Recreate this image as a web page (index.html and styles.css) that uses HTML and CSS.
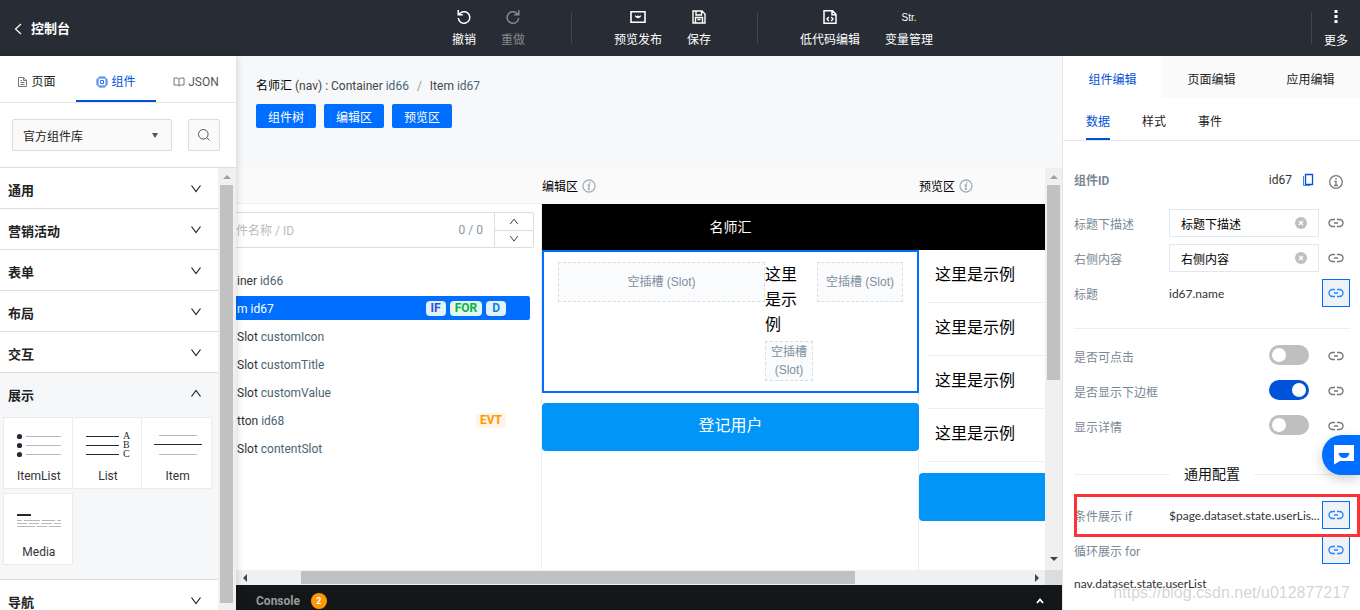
FILE: index.html
```html
<!DOCTYPE html>
<html lang="zh-CN">
<head>
<meta charset="utf-8">
<meta name="viewport" content="width=device-width, initial-scale=1">
<title>控制台</title>
<link rel="stylesheet" href="styles.css">
</head>
<body>
<svg class="sprite" aria-hidden="true">
  <symbol id="down" viewBox="0 0 12 12"><path d="M1.500 2.500 6 8.500l4.500-6" fill="none" stroke="currentColor" stroke-width="1.200"/></symbol>
  <symbol id="up" viewBox="0 0 12 12"><path d="M1.500 8.500 6 2.500l4.500 6" fill="none" stroke="currentColor" stroke-width="1.200"/></symbol>
  <symbol id="link" viewBox="0 0 16 16"><path d="M7 4.500H4.500a3.500 3.500 0 0 0 0 7H7M9 4.500h2.500a3.500 3.500 0 0 1 0 7H9M6 8h4" fill="none" stroke="currentColor" stroke-width="1.400"/></symbol>
  <symbol id="info" viewBox="0 0 14 14"><circle cx="7" cy="7" r="6" fill="none" stroke="currentColor" stroke-width="1.300"/><path d="M7.700 3v1.500M5.500 6h1.800l-.8 4.200h1.600" fill="none" stroke="currentColor" stroke-width="1.400"/></symbol>
  <symbol id="clear" viewBox="0 0 12 12"><circle cx="6" cy="6" r="6" fill="#bfbfbf"/><path d="m4 4 4 4M8 4 4 8" stroke="#fff" stroke-width="1.300"/></symbol>
</svg>

<header class="topbar">
  <a class="back" href="#"><svg width="8" height="12" viewBox="0 0 8 12"><path d="M7 1 1.500 6 7 11" fill="none" stroke="currentColor" stroke-width="1.200"/></svg>控制台</a>
  <nav class="actions">
    <button class="action"><svg viewBox="0 0 16 16"><path d="M2.300 9a5.800 5.800 0 1 0 2.200-5.100L3 5.200M2.200 1v4.700h4.600" fill="none" stroke="currentColor" stroke-width="1.500"/></svg>撤销</button>
    <button class="action" disabled><svg viewBox="0 0 16 16"><path d="M13.700 9a5.800 5.800 0 1 1-2.200-5.100L13 5.200M13.800 1v4.700H9.200" fill="none" stroke="currentColor" stroke-width="1.500"/></svg>重做</button>
    <span class="rule"></span>
    <button class="action"><svg viewBox="0 0 16 16"><path d="M1 2.800h14v10.400H1z" fill="none" stroke="currentColor" stroke-width="1.600"/><path d="M5 6q1.500 1.500 3 .5 1.500 1 3-.5v1.500q-3 3.500-6 0z" fill="currentColor"/></svg>预览发布</button>
    <button class="action"><svg viewBox="0 0 16 16"><path d="M2 2h9l3 3v9H2zM5 2v4h5.500V2M4.500 14V8.500h7V14M6.500 10.500h3" fill="none" stroke="currentColor" stroke-width="1.400"/></svg>保存</button>
    <span class="rule"></span>
    <button class="action"><svg viewBox="0 0 16 16"><path d="M2 1.800h8.500L14 5.300v8.900H2zM10 2v3.800h4" fill="none" stroke="currentColor" stroke-width="1.500"/><path d="M6.800 8 5 10l1.800 2M9.200 8l1.800 2-1.800 2" fill="none" stroke="currentColor" stroke-width="1.400"/></svg>低代码编辑</button>
    <button class="action"><span class="str">Str.</span>变量管理</button>
  </nav>
  <div class="more">
    <span class="rule"></span>
    <button class="action"><svg viewBox="0 0 16 16"><path d="M6.500 1h3v3h-3zM6.500 6h3v3h-3zM6.500 11h3v3h-3z" fill="currentColor"/></svg>更多</button>
  </div>
</header>

<main class="work">
  <aside class="library">
    <nav class="tabs">
      <a href="#"><svg width="11" height="12" viewBox="0 0 11 12"><path d="M1.500 1.500h5l3 3v6h-8zM6.500 1.500v3h3M3.500 4.500h1.500M3.500 6.500h4M3.500 8.500h4" fill="none" stroke="#777"/></svg>页面</a>
      <a href="#" class="on"><svg width="12" height="12" viewBox="0 0 12 12"><path d="M2 2h8v8H2zM4.500 4.500h3v3h-3zM4 0v2m2-2v2m2-2v2M4 10v2m2-2v2m2-2v2M0 4h2M0 6h2M0 8h2M10 4h2M10 6h2M10 8h2" fill="none" stroke="#2f74e8"/></svg>组件</a>
      <a href="#"><svg width="12" height="10" viewBox="0 0 12 10"><path d="M1 1h3.500L6 2l1.500-1H11v7H7.500L6 9 4.500 8H1zM6 2v7" fill="none" stroke="#777"/></svg>JSON</a>
    </nav>
    <div class="find">
      <span class="select"><select aria-label="组件库"><option>官方组件库</option></select><svg width="6" height="5" viewBox="0 0 6 5"><path d="M0 0h6L3 5z" fill="#456"/></svg></span>
      <button class="search" aria-label="搜索"><svg width="14" height="14" viewBox="0 0 14 14"><circle cx="6.300" cy="6.300" r="4.800" fill="none" stroke="#555"/><path d="m9.800 9.800 2.700 2.700" stroke="#555"/></svg></button>
    </div>
    <div class="list">
      <div class="groups">
        <button class="group">通用<svg><use href="#down"/></svg></button>
        <button class="group">营销活动<svg><use href="#down"/></svg></button>
        <button class="group">表单<svg><use href="#down"/></svg></button>
        <button class="group">布局<svg><use href="#down"/></svg></button>
        <button class="group">交互<svg><use href="#down"/></svg></button>
        <section class="open">
          <button class="group">展示<svg><use href="#up"/></svg></button>
          <div class="cards">
            <button class="card"><svg viewBox="0 0 48 32"><g fill="#262b33"><circle cx="4.500" cy="6.500" r="2.600"/><circle cx="4.500" cy="15.500" r="2.600"/><circle cx="4.500" cy="24.500" r="2.600"/></g><path d="M11 6.500h35M11 15.500h35M11 24.500h35" stroke="#b7babd"/></svg>ItemList</button>
            <button class="card"><svg viewBox="0 0 48 32"><path d="M2 6.500h33M2 15.500h33M2 24.500h33" stroke="#262b33"/><g class="abc"><text x="39" y="9">A</text><text x="39" y="18">B</text><text x="39" y="27">C</text></g></svg>List</button>
            <button class="card"><svg viewBox="0 0 48 32"><path d="M5 5.500h38M5 24.500h38" stroke="#b7babd"/><path d="M0 14.500h48" stroke="#262b33"/></svg>Item</button>
            <button class="card"><svg viewBox="0 0 48 32"><path d="M2 9h14" stroke="#262b33" stroke-width="2"/><path d="M2 14.500h5m2 0h16m2 0h13m2 0h4M2 17.500h10m2 0h10m2 0h11m2 0h7M2 20.500h18m2 0h10m2 0h12" stroke="#b7babd"/></svg>Media</button>
          </div>
        </section>
        <button class="group">导航<svg><use href="#down"/></svg></button>
      </div>
      <div class="vbar"><i class="tri top"></i><span class="thumb"></span></div>
    </div>
  </aside>

  <section class="stage">
    <div class="crumbs">
      <p><b>名师汇</b> (nav) : Container <em>id66</em><i>/</i>Item <em>id67</em></p>
      <div class="toggles"><button>组件树</button><button>编辑区</button><button>预览区</button></div>
    </div>
    <div class="canvas">
      <div class="view">
        <section class="tree">
          <h2></h2>
          <div class="treefind">
            <input type="text" aria-label="名称 / ID" placeholder="件名称 / ID"><span>0 / 0</span>
            <div class="steps"><button aria-label="上一个"><svg><use href="#up"/></svg></button><button aria-label="下一个"><svg><use href="#down"/></svg></button></div>
          </div>
          <ul>
            <li><span>iner <em>id66</em></span></li>
            <li class="picked"><span>m <em>id67</em></span><mark class="if">IF</mark><mark class="for">FOR</mark><mark class="d">D</mark></li>
            <li><span>Slot <em>customIcon</em></span></li>
            <li><span>Slot <em>customTitle</em></span></li>
            <li><span>Slot <em>customValue</em></span></li>
            <li><span>tton <em>id68</em></span><mark class="evt">EVT</mark></li>
            <li><span>Slot <em>contentSlot</em></span></li>
          </ul>
        </section>
        <section class="edit">
          <h2>编辑区<svg><use href="#info"/></svg></h2>
          <div class="phone">
            <div class="title">名师汇</div>
            <div class="item">
              <div class="slot wide">空插槽 (Slot)</div>
              <div class="mid"><p>这里是示例</p><div class="slot">空插槽 (Slot)</div></div>
              <div class="slot side">空插槽 (Slot)</div>
            </div>
            <button class="submit">登记用户</button>
          </div>
        </section>
        <section class="preview">
          <h2>预览区<svg><use href="#info"/></svg></h2>
          <div class="phone">
            <div class="title"></div>
            <ul><li>这里是示例</li><li>这里是示例</li><li>这里是示例</li><li>这里是示例</li></ul>
            <button class="submit" aria-label="登记"></button>
          </div>
        </section>
      </div>
      <div class="vbar"><i class="tri top"></i><span class="thumb"></span><i class="tri bottom"></i></div>
      <div class="hbar"><i class="tri left"></i><span class="thumb"></span><i class="tri right"></i></div>
      <div class="corner"></div>
    </div>
    <button class="console"><span>Console</span><b>2</b><svg><path d="m1 6 3-3.500L7 6" fill="none" stroke="#fff" stroke-width="1.800"/></svg></button>
  </section>

  <aside class="props">
    <nav class="major"><a href="#" class="on">组件编辑</a><a href="#">页面编辑</a><a href="#">应用编辑</a></nav>
    <nav class="minor"><a href="#" class="on">数据</a><a href="#">样式</a><a href="#">事件</a></nav>
    <div class="form">
      <div class="row head"><strong>组件ID</strong><span>id67</span><button class="copy" aria-label="复制"><svg width="12" height="14" viewBox="0 0 12 14"><path d="M3.500 1.500h7v10h-7z" fill="none" stroke="#0052d9" stroke-width="1.300"/><path d="M1.500 3v9.500H8" fill="none" stroke="#3f85f0"/></svg></button><button class="bind" aria-label="说明"><svg viewBox="0 0 16 16"><circle cx="8" cy="8" r="6.300" fill="none" stroke="currentColor" stroke-width="1.300"/><path d="M8 4v1.700M6.300 7.300H8v4M6 11.500h4" fill="none" stroke="currentColor" stroke-width="1.300"/></svg></button></div>
      <div class="row"><label for="desc">标题下描述</label><div class="field"><input id="desc" type="text" value="标题下描述"><button aria-label="清除"><svg><use href="#clear"/></svg></button></div><button class="bind" aria-label="绑定"><svg><use href="#link"/></svg></button></div>
      <div class="row"><label for="side">右侧内容</label><div class="field"><input id="side" type="text" value="右侧内容"><button aria-label="清除"><svg><use href="#clear"/></svg></button></div><button class="bind" aria-label="绑定"><svg><use href="#link"/></svg></button></div>
      <div class="row"><span class="name">标题</span><span class="value">id67.name</span><button class="bind on" aria-label="绑定"><svg><use href="#link"/></svg></button></div>
      <hr>
      <div class="row"><label for="click">是否可点击</label><input class="switch" id="click" type="checkbox"><button class="bind" aria-label="绑定"><svg><use href="#link"/></svg></button></div>
      <div class="row"><label for="border">是否显示下边框</label><input class="switch" id="border" type="checkbox" checked><button class="bind" aria-label="绑定"><svg><use href="#link"/></svg></button></div>
      <div class="row"><label for="detail">显示详情</label><input class="switch" id="detail" type="checkbox"><button class="bind" aria-label="绑定"><svg><use href="#link"/></svg></button></div>
      <h3>通用配置</h3>
      <div class="row"><span class="name">条件展示 if</span><span class="value">$page.dataset.state.userLis...</span><button class="bind on" aria-label="绑定"><svg><use href="#link"/></svg></button></div>
      <div class="row"><span class="name">循环展示 for</span><span class="value"></span><button class="bind on" aria-label="绑定"><svg><use href="#link"/></svg></button></div>
      <p class="expr">nav.dataset.state.userList</p>
    </div>
    <div class="highlight"></div>
    <button class="chat" aria-label="客服"><svg width="20" height="20" viewBox="0 0 20 20"><path d="M0 0h20v16H6l-6 3.500z" fill="#fff"/><path d="M4.500 8h11q-1 5-5.500 5T4.500 8" fill="#006eff"/></svg></button>
    <span class="watermark">https://blog.csdn.net/u012877217</span>
  </aside>
</main>
</body>
</html>
```
FILE: styles.css
```css
* { box-sizing: border-box; }
body {
  margin: 0; height: 100vh; overflow: hidden; display: flex; flex-direction: column;
  font: 12px/18px Roboto, "Noto Sans CJK SC", sans-serif; color: #222; background: #fff;
}
button, input, select { font: inherit; color: inherit; margin: 0; padding: 0; border: 0; background: none; }
a { color: inherit; text-decoration: none; }
h2, h3, p, ul { margin: 0; padding: 0; font-weight: normal; }
ul { list-style: none; }
em, i { font-style: normal; }
.sprite { display: none; }
svg { flex: none; }

/* top bar */
.topbar { flex: none; height: 56px; display: grid; grid-template-columns: 1fr auto 1fr; background: #282c34; color: #fff; }
.back { display: flex; align-items: center; gap: 9px; padding: 2px 0 0 14px; font-size: 13px; font-weight: bold; }
.actions { display: flex; align-items: flex-start; gap: 25px; padding-left: 25px; }
.action { display: flex; flex-direction: column; align-items: center; gap: 6px; padding-top: 9px; white-space: nowrap; }
.action svg { width: 16px; height: 16px; }
.action:disabled { color: #85888c; }
.str { font: 10px/18px "Liberation Sans", sans-serif; margin-bottom: -2px; }
.rule { width: 1px; height: 32px; margin: 12px 17px 0 21px; background: #44484e; }
.more { display: flex; justify-content: flex-end; padding-right: 12px; }
.more .rule { margin: 12px 12px 0 0; }
.more .action { gap: 7px; }

.work { flex: 1; min-height: 0; display: flex; }

/* component library */
.library { flex: none; width: 236px; display: flex; flex-direction: column; position: relative; background: #fff; box-shadow: 0 0 8px rgba(0, 0, 0, .2); }
.tabs { flex: none; display: flex; height: 47px; border-bottom: 1px solid #e8e8e8; }
.tabs a { width: 80px; display: flex; align-items: center; justify-content: center; gap: 3px; padding-top: 6px; }
.tabs a:first-child { width: 76px; padding-right: 3px; }
.tabs a:last-child { color: #555; }
.tabs .on { color: #0052d9; padding-top: 8px; border-bottom: 2px solid #0052d9; }
.find { flex: none; display: flex; gap: 16px; padding: 16px 16px 16px 12px; border-bottom: 1px solid #ddd; }
.select { flex: 1; display: grid; align-items: center; border: 1px solid #ddd; border-radius: 2px; background: #fafafa; }
.select select { grid-area: 1 / 1; appearance: none; height: 30px; padding: 3px 10px 0; outline: 0; }
.select svg { grid-area: 1 / 1; justify-self: end; margin-right: 13px; pointer-events: none; }
.search { width: 32px; height: 32px; display: grid; place-items: center; border: 1px solid #ddd; border-radius: 2px; background: #fafafa; }
.list { flex: 1; min-height: 0; display: flex; }
.groups { flex: 1; overflow: hidden; }
.group { width: 100%; height: 41px; display: flex; align-items: center; justify-content: space-between; padding: 6px 16px 0 8px; font-size: 13px; font-weight: bold; border-bottom: 1px solid #ddd; }
.group svg { width: 12px; height: 12px; margin-bottom: 5px; }
.open { background: #f6f7f9; border-bottom: 1px solid #ddd; padding-bottom: 14px; }
.open .group { border: 0; height: 44px; padding-top: 2px; }
.cards { display: grid; grid-template-columns: repeat(3, 1fr); row-gap: 4px; padding: 0 6px 0 3px; }
.card { height: 72px; display: flex; flex-direction: column; align-items: center; gap: 5px; padding: 12px 0 0 2px; background: #fff; border: 1px solid #ebebeb; color: #333; }
.card + .card:not(:last-child) { border-left: 0; }
.card svg { width: 48px; height: 32px; }
.abc { font: 10px "Liberation Serif", serif; fill: #262b33; }

/* scroll bars */
.vbar { width: 17px; flex: none; display: flex; flex-direction: column; align-items: center; background: #f0f0f0; }
.library .vbar { width: 18px; padding-right: 1px; }
.vbar .thumb { width: 13px; background: #c1c1c1; }
.library .thumb { flex: 1; margin-bottom: 7px; }
.tri { flex: none; width: 17px; height: 17px; display: grid; place-items: center; }
.tri::after { content: ""; border: 4px solid transparent; }
.tri.top::after { border-top: 0; border-bottom-color: #a0a0a0; }
.tri.bottom::after { border-bottom: 0; border-top-color: #444; }
.tri.left::after { border-left: 0; border-right-color: #444; }
.tri.right::after { border-right: 0; border-left-color: #444; }

/* stage */
.stage { flex: 1; min-width: 0; display: flex; flex-direction: column; }
.crumbs { flex: none; height: 112px; padding: 21px 20px 0; background: #f6f8fa; color: #444; }
.crumbs b { font-weight: normal; color: #000; }
.crumbs em { color: #4b6472; }
.crumbs i { margin: 0 8px; color: #999; }
.toggles { display: flex; gap: 8px; padding-top: 9px; }
.toggles button { width: 60px; height: 24px; padding-top: 4px; background: #006eff; color: #fff; border-radius: 2px; }
.canvas { flex: 1; min-height: 0; display: grid; grid-template: minmax(0, 1fr) 15px / minmax(0, 1fr) 17px; background: #fff; }
.view { display: flex; overflow: hidden; }
.view h2 { height: 36px; display: flex; align-items: center; gap: 4px; margin-right: -1px; padding-top: 2px; background: #fafafa; font-size: 12px; color: #000; }
.view h2 svg { width: 14px; height: 14px; margin-bottom: 2px; color: #a3b2bd; }
.tree h2 { border-bottom: 1px solid #eee; }
.canvas .vbar .thumb { flex: none; height: 195px; }
.canvas .vbar .bottom { margin-top: auto; height: 23px; }
.hbar { display: flex; align-items: center; background: #f0f0f0; }
.hbar .thumb { flex: none; height: 13px; width: 68.500%; margin-left: 48px; background: #c1c1c1; }
.hbar .right { margin-left: auto; }
.corner { background: #dcdcdc; }

.tree { flex: none; width: 306px; border-right: 1px solid #eee; }
.treefind { height: 36px; display: flex; align-items: center; margin: 8px 7px 20px 0; border: 1px solid #ddd; border-left: 0; border-radius: 0 2px 2px 0; color: #8996a3; }
.treefind input { flex: 1; min-width: 0; padding-top: 2px; outline: 0; }
.treefind input::placeholder { color: #bbb; }
.steps { align-self: stretch; width: 39px; margin-left: 11px; display: grid; grid-template-rows: 1fr 1fr; border-left: 1px solid #ddd; }
.steps button { display: grid; place-items: center; }
.steps button + button { border-top: 1px solid #ddd; }
.steps svg { width: 12px; height: 10px; color: #345; }
.tree li { height: 24px; display: flex; align-items: center; gap: 4px; margin: 0 11px 4px 0; padding: 1px 24px 0 0; color: #333; }
.tree li span { flex: 1; padding-left: 1px; }
.tree em { color: #4b6472; }
.tree .picked { background: #006eff; color: #fff; border-radius: 0 2px 2px 0; }
.tree .picked em { color: #fff; }
mark { padding: 0 5px; font: bold 12px/15px Roboto, sans-serif; border-radius: 4px; background: #e3f1fb; }
.if { color: #2a55d5; }
.for { color: #0ab04a; background: #e2f8ee; }
.d { color: #0a86d8; padding: 0 6px; }
.evt { color: #ff9800; background: #fff4e5; padding: 0 4px; }

.edit, .preview { flex: none; width: 377px; }
.edit { border-right: 1px solid #eee; }
.title { height: 46px; display: grid; place-items: center; background: #000; color: #fff; font-size: 14px; }
.edit .title, .edit .item, .edit .submit { margin-right: -1px; }
.item { display: flex; align-items: flex-start; height: 143px; padding: 10px 14px; border: 2px solid #006eff; font: 16px/25px "Noto Sans CJK SC", sans-serif; color: #000; }
.slot { display: grid; place-items: center; height: 40px; border: 1px dashed #ddd; background: #fafbfd; color: #8090a0; font: 12px/18px "Liberation Sans", "Noto Sans CJK SC", sans-serif; text-align: center; }
.slot.wide { flex: 1; }
.mid { flex: none; width: 48px; }
.mid p { width: 38px; margin: -1px 0 5px; }
.slot.side { flex: none; width: 86px; margin-left: 4px; }
.submit { display: block; width: 100%; height: 48px; margin-top: 10px; padding-bottom: 3px; background: #0095f7; color: #fff; border-radius: 4px; font-size: 16px; }
.edit .submit { width: 377px; }
.preview ul { padding-bottom: 1px; }
.preview li { height: 53px; margin-left: 8px; padding: 11px 8px; border-bottom: 1px solid #eee; font: 16px/25px "Noto Sans CJK SC", sans-serif; color: #000; }
.console { flex: none; height: 25px; display: flex; align-items: center; gap: 11px; padding: 6px 18px 0 20px; background: #14171a; color: #999; text-align: left; }
.console span { font-weight: bold; }
.console b { width: 16px; height: 16px; border-radius: 8px; background: #ff9800; color: #fff; font-size: 9px; line-height: 16px; text-align: center; }
.console svg { width: 8px; height: 8px; margin-left: auto; }

/* properties */
.props { flex: none; width: 298px; position: relative; overflow: hidden; background: #fff; border-left: 1px solid #e5e5e5; }
.major { height: 42px; display: flex; background: #fafafa; }
.major a { flex: 1; display: grid; place-items: center; padding-top: 6px; }
.major .on { background: #fff; color: #0052d9; }
.minor { height: 43px; display: flex; gap: 32px; padding-left: 23px; border-bottom: 1px solid #e8e8e8; }
.minor a { padding-top: 15px; }
.minor .on { color: #0052d9; border-bottom: 2px solid #0052d9; }
.form { padding: 25px 10px 0 11px; color: #333; }
.row { height: 28px; display: flex; align-items: center; gap: 3px; margin-bottom: 7px; }
.row label, .name { flex: none; width: 92px; padding-top: 3px; color: #7b8794; white-space: nowrap; }
.row.head { margin-bottom: 15px; }
.head strong { flex: 1; padding-top: 2px; color: #7b8794; }
.head span { margin-right: 7px; }
.copy { width: 12px; height: 14px; margin-right: 5px; }
.row.head .bind { padding-top: 3px; }
.field { flex: 1; min-width: 0; height: 28px; display: flex; align-items: center; padding: 0 11px; border: 1px solid #e3e7eb; }
.field input { flex: 1; min-width: 0; padding-top: 3px; outline: 0; color: #000; }
.field button, .field svg { width: 12px; height: 12px; display: block; }
.value, .expr { font-family: Lato, "Noto Sans CJK SC", sans-serif; }
.value { flex: 1; min-width: 0; padding-top: 2px; white-space: nowrap; }
.bind { flex: none; width: 28px; height: 28px; display: grid; place-items: center; color: #777; }
.bind svg { width: 16px; height: 16px; }
.bind.on { color: #2d83fa; background: #edf2f7; border: 1px solid #006eff; }
.form hr { height: 1px; margin: 21px 0 13px; border: 0; background: #eee; }
.switch { appearance: none; flex: none; width: 40px; height: 20px; padding: 3px; margin: 0 10px 2px auto; border-radius: 10px; background: #bfbfbf; display: flex; }
.switch::before { content: ""; width: 14px; height: 14px; border-radius: 7px; background: #fff; }
.switch:checked { background: #0052d9; justify-content: flex-end; }
.form h3 { display: flex; align-items: center; gap: 14px; margin: 25px 0 18px; font-size: 14px; line-height: 18px; color: #111; }
.form h3::before, .form h3::after { content: ""; flex: 1; height: 1px; background: #eee; }
.expr { margin-top: 11px; }
.highlight { position: absolute; top: 438px; left: 11px; right: 0; height: 43px; border: 3px solid #fb3337; }
.chat { position: absolute; top: 379px; right: 0; width: 38px; height: 40px; display: grid; place-items: center; padding-left: 6px; border-radius: 20px 0 0 20px; background: #006eff; box-shadow: 0 4px 12px rgba(0, 0, 0, .2); }
.watermark { position: absolute; right: 10px; bottom: 7px; font: 16px/20px "Liberation Sans", sans-serif; color: rgba(130, 130, 130, .35); pointer-events: none; }
```
